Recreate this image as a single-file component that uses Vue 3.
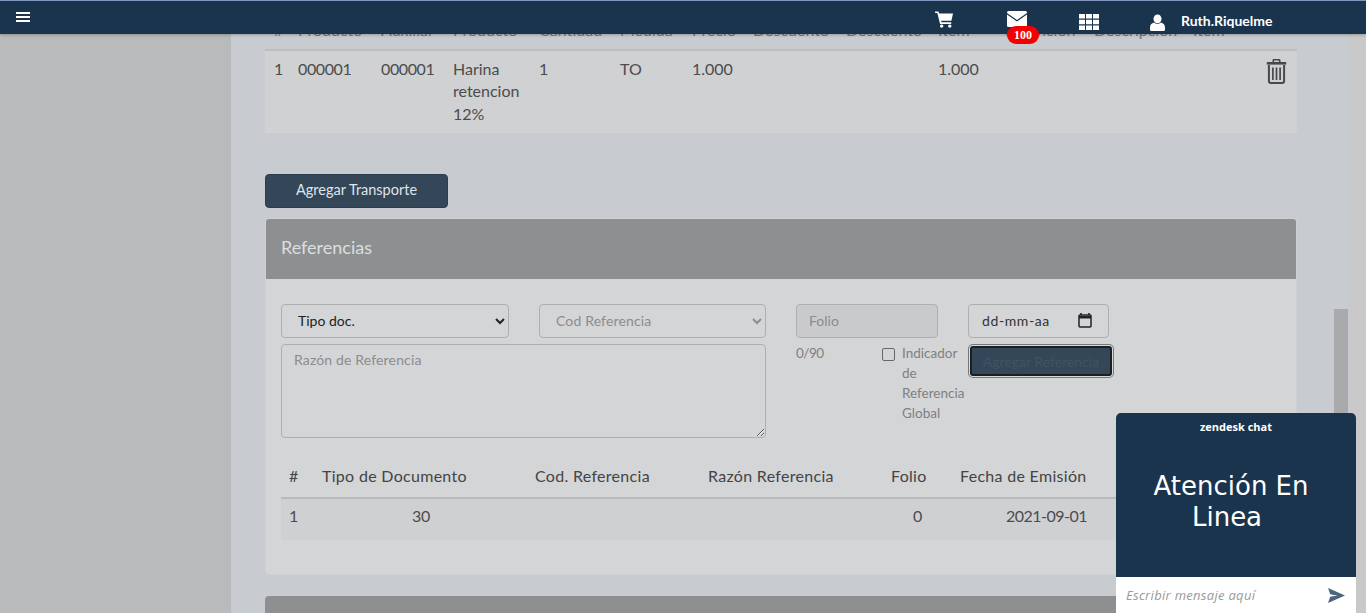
<script setup>
const detalleCols = ['#', 'Producto', 'Auxiliar', 'Producto', 'Cantidad', 'Medida', 'Precio', 'Descuento', 'Descuento', 'Item', 'Retención', 'Descripción', 'Item']
const refCols = ['#', 'Tipo de Documento', 'Cod. Referencia', 'Razón Referencia', 'Folio', 'Fecha de Emisión']
</script>

<template>
  <div class="page">
    <header class="topbar">
      <svg class="burger" viewBox="0 0 14 12" width="14" height="12"><path d="M0 1h14v2H0zM0 5h14v2H0zM0 9h14v2H0z" fill="#fff"/></svg>
      <svg class="ico cart" viewBox="0 0 20 18" width="19" height="17">
        <path d="M0 0.5h3.600l.7 2.200H19l-1.700 7.600H6.400l.4 1.700h10.300v1.700H5.300L2.400 2.200H0z" fill="#fff"/>
        <circle cx="7" cy="16" r="1.800" fill="#fff"/><circle cx="15.600" cy="16" r="1.800" fill="#fff"/>
      </svg>
      <div class="mail">
        <svg viewBox="0 0 20 16" width="20" height="16">
          <path d="M1.500 0h17A1.500 1.500 0 0 1 20 1.500v.6l-10 7-10-7v-.6A1.500 1.500 0 0 1 1.500 0z" fill="#fff"/>
          <path d="M0 3.600l10 7 10-7v10.900a1.500 1.500 0 0 1-1.500 1.500h-17A1.500 1.500 0 0 1 0 14.500z" fill="#fff"/>
        </svg>
        <span class="badge">100</span>
      </div>
      <svg class="ico grid" viewBox="0 0 20 16" width="20" height="16">
        <path d="M0 0h6v4.500H0zM7 0h6v4.500H7zM14 0h6v4.500h-6zM0 5.750h6v4.500H0zM7 5.750h6v4.500H7zM14 5.750h6v4.500h-6zM0 11.500h6V16H0zM7 11.500h6V16H7zM14 11.500h6V16h-6z" fill="#fff"/>
      </svg>
      <svg class="ico user" viewBox="0 0 16 21" width="15" height="17" preserveAspectRatio="none">
        <ellipse cx="8" cy="6" rx="4.300" ry="5.500" fill="#fff"/>
        <path d="M4.500 10.500C1.500 11.500 0 13.500 0 17v2.500C0 20.500 1 21 2 21h12c1 0 2-.5 2-1.500V17c0-3.500-1.500-5.500-4.500-6.500-1 1.200-2.200 1.800-3.500 1.800s-2.500-.6-3.500-1.800z" fill="#fff"/>
      </svg>
      <span class="username">Ruth.Riquelme</span>
    </header>

    <aside class="sidebar"></aside>

    <main class="content">
      <div class="thead detalle-grid">
        <span v-for="(c, i) in detalleCols" :key="i">{{ c }}</span>
      </div>
      <div class="trow detalle-grid">
        <span>1</span>
        <span class="num">000001</span>
        <span class="num">000001</span>
        <span>Harina retencion 12%</span>
        <span>1</span>
        <span>TO</span>
        <span>1.000</span>
        <span></span>
        <span></span>
        <span>1.000</span>
        <span></span>
        <span></span>
        <span class="trash-cell">
          <svg viewBox="0 0 20 25" width="21" height="25">
            <path d="M6.800 3V1.600A1 1 0 0 1 7.800.6h4.400a1 1 0 0 1 1 1V3" fill="none" stroke="#48494a" stroke-width="1.600"/>
            <path d="M.3 3h19.400v2.600H.3z" fill="#48494a"/>
            <path d="M2.400 6v16a2 2 0 0 0 2 2h11.200a2 2 0 0 0 2-2V6" fill="none" stroke="#48494a" stroke-width="2"/>
            <path d="M6.400 8.500v12.500M10 8.500v12.500M13.600 8.500v12.500" fill="none" stroke="#48494a" stroke-width="1.700"/>
          </svg>
        </span>
      </div>

      <button class="btn-transporte" type="button">Agregar Transporte</button>

      <section class="card">
        <h2 class="card-head">Referencias</h2>
        <div class="card-body">
          <div class="form">
            <div class="form-left">
              <div class="selects">
                <select class="field sel-tipo"><option>Tipo doc.</option></select>
                <select class="field sel-cod" disabled><option>Cod Referencia</option></select>
              </div>
              <textarea class="field razon" placeholder="Razón de Referencia"></textarea>
            </div>
            <div class="form-mid">
              <input class="field folio" placeholder="Folio" disabled>
              <div class="mid-under">
                <span class="counter">0/90</span>
                <label class="indicador">
                  <input type="checkbox">
                  <span>Indicador de Referencia Global</span>
                </label>
              </div>
            </div>
            <div class="form-right">
              <div class="field fecha">
                <span>dd-mm-aa</span>
                <svg viewBox="0 0 14 15" width="14" height="15">
                  <path d="M3 0v2M11 0v2" stroke="#222" stroke-width="1.600"/>
                  <rect x="1" y="2" width="12" height="12" rx="1" fill="none" stroke="#222" stroke-width="1.500"/>
                  <path d="M1 3h12v2.500H1z" fill="#222"/>
                </svg>
              </div>
              <button class="btn-ref" type="button">Agregar Referencia</button>
            </div>
          </div>

          <div class="ref-head ref-grid">
            <span v-for="c in refCols" :key="c">{{ c }}</span>
          </div>
          <div class="ref-row ref-grid">
            <span>1</span>
            <span class="c-tipo">30</span>
            <span></span>
            <span></span>
            <span class="c-folio">0</span>
            <span class="c-fecha">2021-09-01</span>
          </div>
        </div>
      </section>

      <section class="card-next"></section>
    </main>

    <div class="scrolltrack"><div class="thumb"></div></div>
    <div class="strip"></div>

    <div class="chat">
      <div class="chat-brand">zendesk chat</div>
      <div class="chat-title">Atención En <span class="line2">Linea</span></div>
      <div class="chat-input">
        <span>Escribir mensaje aquí</span>
        <svg viewBox="0 0 17 15" width="17" height="15"><path d="M0 0l17 7.500L0 15l2.200-6.200 7.300-1.300-7.300-1.300z" fill="#4a6580"/></svg>
      </div>
    </div>
  </div>
</template>

<style scoped>
.page {
  position: relative;
  display: flex;
  height: 613px;
  overflow: hidden;
  background: #c8cbd0;
  font-family: Lato, "Liberation Sans", sans-serif;
  font-size: 16px;
  color: #4b4c4d;
}

.topbar {
  position: absolute;
  top: 0;
  left: 0;
  right: 0;
  z-index: 5;
  height: 33px;
  border-top: 1px solid #7f96bd;
  background: #1a344e;
  box-shadow: 0 1px 3px rgba(0, 0, 0, 0.25);
}
.burger {
  position: absolute;
  left: 16px;
  top: 10px;
}
.ico {
  position: absolute;
}
.cart {
  left: 935px;
  top: 10px;
}
.mail {
  position: absolute;
  left: 1007px;
  top: 10px;
  width: 20px;
  height: 16px;
}
.mail svg {
  display: block;
}
.badge {
  position: absolute;
  left: 0;
  top: 15px;
  width: 32px;
  height: 18px;
  border-radius: 9px;
  background: #f50000;
  color: #fff;
  font: bold 12px/18px "Liberation Serif", serif;
  text-align: center;
}
.grid {
  left: 1079px;
  top: 13px;
}
.user {
  left: 1150px;
  top: 13px;
}
.username {
  position: absolute;
  left: 1181px;
  top: 11px;
  color: #fff;
  font-size: 14px;
  line-height: 18px;
  font-weight: 700;
}

.sidebar {
  flex: 0 0 231px;
  background: #b9babb;
  box-shadow: inset 0 6px 4px -4px rgba(0, 0, 0, 0.12);
}

.content {
  flex: 0 0 1103px;
  padding: 20px 37px 0 34px;
  box-sizing: border-box;
}

.detalle-grid {
  display: grid;
  grid-template-columns: 24px 83px 72px 86px 81px 72px 61px 93px 92px 67px 89px 99px 1fr;
}
.thead {
  height: 29px;
  padding-left: 9px;
  border-bottom: 2px solid #bcbdc0;
  line-height: 20px;
  white-space: nowrap;
  color: #77787a;
}
.trow {
  height: 82px;
  padding: 7px 0 0 9px;
  box-sizing: border-box;
  background: #d0d1d3;
  line-height: 22.300px;
}
.num {
  letter-spacing: -0.4px;
}
.trash-cell {
  text-align: right;
  padding-right: 10px;
  margin-top: 1px;
}

.btn-transporte {
  display: block;
  width: 183px;
  height: 34px;
  margin: 41px 0 10px;
  padding: 0 0 3px;
  border: 1px solid #2a3d50;
  border-radius: 4px;
  background: #344758;
  color: #dfe4ea;
  font: 14.500px Lato, sans-serif;
}

.card {
  height: 357px;
  border: 1px solid #cfd0d2;
  border-radius: 4px;
  box-sizing: border-box;
  background: #d4d5d7;
  overflow: hidden;
}
.card-head {
  height: 60px;
  margin: 0;
  padding-left: 15px;
  background: #8e8f91;
  color: #d9dfe0;
  font-size: 18px;
  font-weight: 400;
  line-height: 57px;
}
.card-body {
  padding: 25px 15px 0;
}

.form {
  display: flex;
  height: 156px;
}
.form-left {
  width: 485px;
}
.selects {
  display: flex;
  justify-content: space-between;
  margin-bottom: 6px;
}
.field {
  border: 1px solid #aeafb1;
  border-radius: 4px;
  box-sizing: border-box;
  background: #d4d5d7;
  font: 14px Lato, sans-serif;
}
select.field {
  height: 34px;
  padding: 0 12px 2px;
}
.sel-tipo {
  width: 228px;
  color: #222;
}
.sel-cod {
  width: 227px;
  color: #8b8c8e;
  opacity: 1;
  letter-spacing: 0.15px;
}
.razon {
  display: block;
  width: 485px;
  height: 94px;
  padding: 6px 12px;
  outline: none;
  letter-spacing: 0.15px;
}
.razon::placeholder,
.folio::placeholder {
  color: #8b8c8e;
  opacity: 1;
}

.form-mid {
  width: 172px;
  margin-left: 30px;
}
.folio {
  display: block;
  width: 142px;
  height: 34px;
  padding: 0 12px 2px;
  background: #c9cacc;
}
.mid-under {
  display: flex;
  margin-top: 5px;
  font-size: 13.500px;
  color: #7f8082;
}
.counter {
  width: 86px;
  line-height: 20px;
  letter-spacing: -0.5px;
}
.indicador {
  display: flex;
  flex: 1;
  line-height: 20px;
}
.indicador input {
  appearance: none;
  flex: 0 0 13px;
  width: 13px;
  height: 13px;
  margin: 5px 7px 0 0;
  border: 1px solid #66676a;
  border-radius: 2px;
  background: #d4d5d7;
}

.form-right {
  width: 146px;
}
.fecha {
  display: flex;
  align-items: center;
  justify-content: space-between;
  width: 141px;
  height: 34px;
  padding: 0 16px 2px 13px;
  color: #333;
  letter-spacing: 0.6px;
}
.btn-ref {
  display: block;
  width: 142px;
  height: 30px;
  margin: 8px 2px 0;
  padding: 0;
  border: 2px solid #1d1e20;
  border-radius: 3px;
  box-shadow: 0 0 0 1px #d8d9da, 0 0 0 2px #77787a;
  background: #344758;
  color: #425363;
  font: 14px Lato, sans-serif;
  white-space: nowrap;
}

.ref-grid {
  display: grid;
  grid-template-columns: 33px 213px 173px 183px 69px 1fr;
  padding-left: 8px;
}
.ref-head {
  height: 37px;
  border-bottom: 2px solid #b9babc;
  line-height: 32px;
  color: #444;
  letter-spacing: 0.3px;
  white-space: nowrap;
}
.ref-row {
  height: 41px;
  background: #cfd0d2;
  line-height: 34px;
}
.c-tipo {
  padding-left: 90px;
  letter-spacing: -0.4px;
}
.c-folio {
  padding-left: 22px;
}
.c-fecha {
  padding-left: 46px;
  letter-spacing: -0.5px;
}

.card-next {
  height: 60px;
  margin-top: 21px;
  border-radius: 4px 4px 0 0;
  background: #8e8f91;
}

.scrolltrack {
  flex: 0 0 14px;
}
.thumb {
  height: 304px;
  margin-top: 309px;
  background: #a9aaab;
}
.strip {
  flex: 1;
  margin-left: 1px;
  background: #c9c9ca;
}

.chat {
  position: absolute;
  left: 1116px;
  bottom: 0;
  z-index: 6;
  display: flex;
  flex-direction: column;
  width: 240px;
  height: 200px;
  border-radius: 5px 5px 0 0;
  overflow: hidden;
  background: #1a344e;
  color: #fff;
}
.chat-brand {
  padding-top: 7px;
  font: bold 11px/14px "Open Sans", sans-serif;
  text-align: center;
}
.chat-title {
  flex: 1;
  padding: 37px 30px 0 20px;
  font: 26px/31px "DejaVu Sans", sans-serif;
  text-align: center;
}
.line2 {
  display: block;
  padding-right: 8px;
}
.chat-input {
  display: flex;
  align-items: center;
  justify-content: space-between;
  height: 36px;
  padding: 0 11px 0 10px;
  background: #fff;
  color: #9a9a9a;
  font: italic 13px "Open Sans", sans-serif;
  letter-spacing: 0.3px;
}
</style>

<style>
body {
  margin: 0;
  overflow: hidden;
}
</style>
